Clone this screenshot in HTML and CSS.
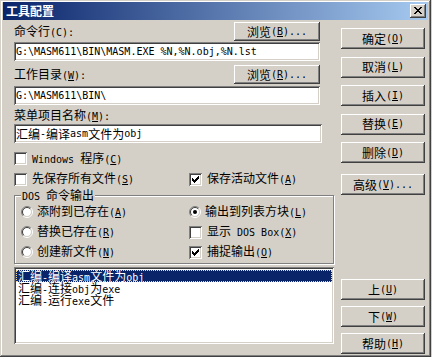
FILE: index.html
```html
<!DOCTYPE html>
<html lang="zh-CN">
<head>
<meta charset="UTF-8">
<title>工具配置</title>
<link rel="stylesheet" href="styles.css">
</head>
<body>
<div class="win">
    <div class="title">
        <span>工具配置</span>
        <div class="close">
            <svg width="8" height="7" viewBox="0 0 8 7"><path fill="#000" d="M0 0h2v1H0zM6 0h2v1H6zM1 1h2v1H1zM5 1h2v1H5zM2 2h4v1H2zM3 3h2v1H3zM2 4h4v1H2zM1 5h2v1H1zM5 5h2v1H5zM0 6h2v1H0zM6 6h2v1H6z"/></svg>
        </div>
    </div>
    <div class="main">
        <div class="left">
            <div class="row row-cmd">
                <span>命令行<span class="a">(C):</span></span>
                <div class="btn btn-browse">浏览<span class="a">(<u>B</u>)...</span></div>
            </div>
            <div class="field field-cmd"><span class="a">G:\MASM611\BIN\MASM.EXE %N,%N.obj,%N.lst</span></div>

            <div class="row row-dir">
                <span>工作目录<span class="a">(<u>W</u>):</span></span>
                <div class="btn btn-browse">浏览<span class="a">(<u>R</u>)...</span></div>
            </div>
            <div class="field field-dir"><span class="a">G:\MASM611\BIN\</span></div>

            <div class="lbl-menu">菜单项目名称<span class="a">(<u>M</u>):</span></div>
            <div class="field field-menu">汇编<span class="a">-</span>编译<span class="a">asm</span>文件为<span class="a">obj</span></div>

            <div class="opt chk-win">
                <span class="chk"></span>
                <span><span class="a">Windows </span>程序<span class="a">(<u>C</u>)</span></span>
            </div>
            <div class="chk-row2">
                <div class="opt">
                    <span class="chk"></span>
                    <span>先保存所有文件<span class="a">(<u>S</u>)</span></span>
                </div>
                <div class="opt">
                    <span class="chk"><svg width="13" height="13" viewBox="0 0 13 13" shape-rendering="crispEdges"><path fill="#000" d="M3 5h1v3H3zM4 6h1v3H4zM5 7h1v3H5zM6 6h1v3H6zM7 5h1v3H7zM8 4h1v3H8zM9 3h1v3H9z"/></svg></span>
                    <span>保存活动文件<span class="a">(<u>A</u>)</span></span>
                </div>
            </div>

            <div class="group">
                <span class="caption"><span class="a">DOS </span>命令输出</span>
                <div class="opt radio-opt">
                    <svg class="radio" width="12" height="12" viewBox="0 0 12 12"><circle cx="6" cy="6" r="4.2" fill="#fff"/><path d="M2.1 9.9A5.5 5.5 0 0 1 9.9 2.1" stroke="#808080" fill="none"/><path d="M9.9 2.1A5.5 5.5 0 0 1 2.1 9.9" stroke="#fff" fill="none"/><path d="M2.8 9.2A4.5 4.5 0 0 1 9.2 2.8" stroke="#404040" fill="none"/><path d="M9.2 2.8A4.5 4.5 0 0 1 2.8 9.2" stroke="#d4d0c8" fill="none"/></svg>
                    <span>添附到已存在<span class="a">(<u>A</u>)</span></span>
                </div>
                <div class="opt radio-opt">
                    <svg class="radio" width="12" height="12" viewBox="0 0 12 12"><circle cx="6" cy="6" r="4.2" fill="#fff"/><path d="M2.1 9.9A5.5 5.5 0 0 1 9.9 2.1" stroke="#808080" fill="none"/><path d="M9.9 2.1A5.5 5.5 0 0 1 2.1 9.9" stroke="#fff" fill="none"/><path d="M2.8 9.2A4.5 4.5 0 0 1 9.2 2.8" stroke="#404040" fill="none"/><path d="M9.2 2.8A4.5 4.5 0 0 1 2.8 9.2" stroke="#d4d0c8" fill="none"/><circle cx="6" cy="6" r="2" fill="#000"/></svg>
                    <span>输出到列表方块<span class="a">(<u>L</u>)</span></span>
                </div>
                <div class="opt radio-opt">
                    <svg class="radio" width="12" height="12" viewBox="0 0 12 12"><circle cx="6" cy="6" r="4.2" fill="#fff"/><path d="M2.1 9.9A5.5 5.5 0 0 1 9.9 2.1" stroke="#808080" fill="none"/><path d="M9.9 2.1A5.5 5.5 0 0 1 2.1 9.9" stroke="#fff" fill="none"/><path d="M2.8 9.2A4.5 4.5 0 0 1 9.2 2.8" stroke="#404040" fill="none"/><path d="M9.2 2.8A4.5 4.5 0 0 1 2.8 9.2" stroke="#d4d0c8" fill="none"/></svg>
                    <span>替换已存在<span class="a">(<u>R</u>)</span></span>
                </div>
                <div class="opt">
                    <span class="chk"></span>
                    <span>显示<span class="a"> DOS Box(<u>X</u>)</span></span>
                </div>
                <div class="opt radio-opt">
                    <svg class="radio" width="12" height="12" viewBox="0 0 12 12"><circle cx="6" cy="6" r="4.2" fill="#fff"/><path d="M2.1 9.9A5.5 5.5 0 0 1 9.9 2.1" stroke="#808080" fill="none"/><path d="M9.9 2.1A5.5 5.5 0 0 1 2.1 9.9" stroke="#fff" fill="none"/><path d="M2.8 9.2A4.5 4.5 0 0 1 9.2 2.8" stroke="#404040" fill="none"/><path d="M9.2 2.8A4.5 4.5 0 0 1 2.8 9.2" stroke="#d4d0c8" fill="none"/></svg>
                    <span>创建新文件<span class="a">(<u>N</u>)</span></span>
                </div>
                <div class="opt">
                    <span class="chk"><svg width="13" height="13" viewBox="0 0 13 13" shape-rendering="crispEdges"><path fill="#000" d="M3 5h1v3H3zM4 6h1v3H4zM5 7h1v3H5zM6 6h1v3H6zM7 5h1v3H7zM8 4h1v3H8zM9 3h1v3H9z"/></svg></span>
                    <span>捕捉输出<span class="a">(<u>O</u>)</span></span>
                </div>
            </div>

            <div class="list">
                <div class="item sel">汇编<span class="a">-</span>编译<span class="a">asm</span>文件为<span class="a">obj</span></div>
                <div class="item">汇编<span class="a">-</span>连接<span class="a">obj</span>为<span class="a">exe</span></div>
                <div class="item">汇编<span class="a">-</span>运行<span class="a">exe</span>文件</div>
            </div>
        </div>

        <div class="right">
            <div class="btn-group">
                <div class="btn">确定<span class="a">(<u>O</u>)</span></div>
                <div class="btn">取消<span class="a">(<u>L</u>)</span></div>
                <div class="btn">插入<span class="a">(<u>I</u>)</span></div>
                <div class="btn">替换<span class="a">(<u>E</u>)</span></div>
                <div class="btn">删除<span class="a">(<u>D</u>)</span></div>
            </div>
            <div class="btn btn-adv">高级<span class="a">(<u>V</u>)...</span></div>
            <div class="btn-group btn-group-bottom">
                <div class="btn">上<span class="a">(<u>U</u>)</span></div>
                <div class="btn">下<span class="a">(<u>W</u>)</span></div>
                <div class="btn">帮助<span class="a">(<u>H</u>)</span></div>
            </div>
        </div>
    </div>
</div>
</body>
</html>
```

FILE: styles.css
```css
* {
    box-sizing: border-box;
}

body {
    margin: 0;
    background-color: #d4d0c8;
    font-family: "Noto Sans CJK SC", sans-serif;
    font-size: 12px;
    line-height: 12px;
    color: #000;
}

/* latin runs: narrow monospace, like the old bitmap font */
.a {
    font-family: "DejaVu Sans Mono", monospace;
    font-size: 10px;
}

.win {
    width: 431px;
    height: 357px;
    display: flex;
    flex-direction: column;
    padding: 2px 3px 3px 3px;
    background-color: #d4d0c8;
    box-shadow: inset -1px -1px #404040, inset 1px 1px #d4d0c8, inset -2px -2px #808080, inset 2px 2px #fff;
}

.title {
    height: 18px;
    display: flex;
    align-items: center;
    justify-content: space-between;
    padding: 0 2px 0 3px;
    background: linear-gradient(to right, #0a246a, #a6caf0);
    color: #fff;
    font-weight: bold;
}

.close {
    width: 16px;
    height: 14px;
    display: flex;
    align-items: center;
    justify-content: center;
    padding-bottom: 1px;
    background-color: #d4d0c8;
    box-shadow: inset -1px -1px #404040, inset 1px 1px #fff, inset -2px -2px #808080;
}

.main {
    flex: 1;
    display: flex;
    gap: 7px;
    padding-left: 11px;
}

.left {
    width: 320px;
    display: flex;
    flex-direction: column;
}

.right {
    width: 84px;
    display: flex;
    flex-direction: column;
    padding-top: 8px;
}

.btn {
    height: 21px;
    display: flex;
    align-items: center;
    justify-content: center;
    white-space: nowrap;
    background-color: #d4d0c8;
    box-shadow: inset -1px -1px #404040, inset 1px 1px #fff, inset -2px -2px #808080, inset 2px 2px #d4d0c8;
}

.btn-group {
    display: flex;
    flex-direction: column;
    gap: 7.5px;
}

.btn-adv {
    margin-top: 11px;
}

.btn-group-bottom {
    margin-top: auto;
    gap: 6px;
}

.row {
    width: 306px;
    height: 19px;
    display: flex;
    align-items: center;
    justify-content: space-between;
}

.row-cmd {
    margin-top: 2px;
}

.row-dir {
    margin-top: 4px;
}

.btn-browse {
    width: 86px;
    height: 19px;
}

.field {
    height: 19px;
    display: flex;
    align-items: center;
    padding: 0 2px;
    white-space: nowrap;
    overflow: hidden;
    background-color: #fff;
    box-shadow: inset 1px 1px #808080, inset -1px -1px #fff, inset 2px 2px #404040, inset -2px -2px #d4d0c8;
}

.field-cmd {
    width: 306px;
    margin-top: 1px;
}

.field-dir {
    width: 306px;
    margin-top: 2px;
}

.lbl-menu {
    margin-top: 4px;
    height: 12px;
}

.field-menu {
    width: 308px;
    margin-top: 3px;
}

.opt {
    display: flex;
    align-items: center;
    gap: 5px;
    white-space: nowrap;
}

.chk {
    width: 13px;
    height: 13px;
    flex-shrink: 0;
    background-color: #fff;
    box-shadow: inset 1px 1px #808080, inset -1px -1px #fff, inset 2px 2px #404040, inset -2px -2px #d4d0c8;
}

.chk svg {
    display: block;
}

.chk-win {
    height: 13px;
    margin-top: 9px;
}

.chk-row2 {
    height: 13px;
    margin-top: 7px;
    display: grid;
    grid-template-columns: 175px 1fr;
}

.group {
    position: relative;
    height: 69px;
    margin-top: 10px;
    padding: 6px 0 0 6px;
    border: 1px solid #808080;
    box-shadow: inset 1px 1px #fff, 1px 1px #fff;
    display: grid;
    grid-template-columns: 168px 1fr;
    grid-auto-rows: 20px;
    align-items: center;
}

.caption {
    position: absolute;
    top: -7px;
    left: 6px;
    padding: 0 1px;
    line-height: 12px;
    background-color: #d4d0c8;
}

.radio-opt {
    gap: 4px;
}

.radio {
    flex-shrink: 0;
    display: block;
}

.list {
    width: 320px;
    height: 77px;
    margin-top: 3px;
    padding: 3px 2px;
    background-color: #fff;
    box-shadow: inset 1px 1px #808080, inset -1px -1px #fff, inset 2px 2px #404040, inset -2px -2px #d4d0c8;
}

.item {
    height: 12px;
    line-height: 12px;
    padding-left: 2px;
    white-space: nowrap;
}

.item.sel {
    background-color: #0a246a;
    color: #fff;
    outline: 1px dotted #f5db95;
    outline-offset: -1px;
}
```
